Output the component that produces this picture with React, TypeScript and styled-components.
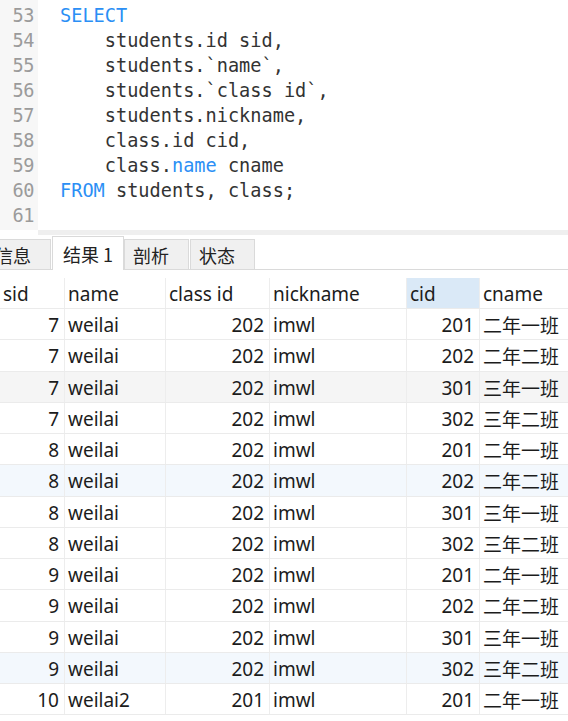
import React from "react";
import styled, { createGlobalStyle } from "styled-components";

const Global = createGlobalStyle`
  html, body { margin: 0; padding: 0; background: #fff; overflow: hidden; }
  body { width: 568px; height: 721px; }
`;

const Page = styled.div`
  width: 568px;
  height: 721px;
  overflow: hidden;
  display: flex;
  flex-direction: column;
  background: #fff;
`;

const Editor = styled.div`
  display: flex;
  height: 230px;
  flex: none;
  font-family: "DejaVu Sans Mono", "Liberation Mono", monospace;
  font-size: 18.6px;
  line-height: 25px;
`;

const Gutter = styled.div`
  width: 38px;
  box-sizing: border-box;
  background: #f7f7f7;
  color: #9b9b9b;
  text-align: right;
  padding: 3px 4px 0 0;
  letter-spacing: -0.4px;
`;

const Code = styled.div`
  flex: 1;
  padding: 3px 0 0 22px;
  color: #333;
  white-space: pre;
`;

const Line = styled.div`
  height: 25px;
`;

const Kw = styled.span`
  color: #2b8ff5;
`;

const Track = styled.div`
  display: flex;
  height: 5px;
  flex: none;
`;

const TrackGap = styled.div`
  width: 38px;
  background: #fff;
`;

const TrackBar = styled.div`
  flex: 1;
  background: #efefef;
`;

const TabBar = styled.div`
  display: flex;
  align-items: flex-end;
  height: 35px;
  box-sizing: border-box;
  border-bottom: 1px solid #dadada;
  margin-left: -14px;
  gap: 1px;
  flex: none;
  font-family: "Noto Sans CJK SC", "Noto Sans", sans-serif;
  font-size: 18px;
  color: #222;
`;

const Tab = styled.div<{ $active?: boolean }>`
  min-width: 65px;
  box-sizing: border-box;
  padding: ${(p) => (p.$active ? "0 10px" : "0 8px")};
  height: ${(p) => (p.$active ? "34px" : "30px")};
  margin-bottom: ${(p) => (p.$active ? "-1px" : "0")};
  margin-right: ${(p) => (p.$active ? "-1px" : "0")};
  background: ${(p) => (p.$active ? "#fff" : "#f0f0f0")};
  border: 1px solid #dadada;
  border-bottom: none;
  display: flex;
  align-items: center;
  line-height: 1;
`;

const Grid = styled.div`
  margin-top: 7px;
  font-family: "Noto Sans", "Noto Sans CJK SC", sans-serif;
  font-size: 19px;
  color: #1c1c1c;
`;

const Row = styled.div<{ $tone?: "gray" | "blue" | "none"; $head?: boolean }>`
  display: grid;
  grid-template-columns: 65px 101px 104px 137px 73px 1fr;
  height: ${(p) => (p.$head ? "32px" : "31.25px")};
  box-sizing: border-box;
  border-bottom: 1px solid #ebebeb;
  background: ${(p) =>
    p.$tone === "gray" ? "#f5f5f5" : p.$tone === "blue" ? "#f3f8fd" : "#fff"};
`;

const Cell = styled.div<{ $num?: boolean; $hl?: boolean }>`
  box-sizing: border-box;
  border-right: 1px solid #ededed;
  display: flex;
  align-items: center;
  justify-content: ${(p) => (p.$num ? "flex-end" : "flex-start")};
  padding: ${(p) => (p.$num ? "2px 5px 0 0" : "2px 0 0 3px")};
  background: ${(p) => (p.$hl ? "#dae9f7" : "transparent")};
  white-space: nowrap;
  overflow: hidden;
  &:last-child { border-right: none; }
`;

const HeadCell = styled(Cell)`
  margin-top: 1px;
`;

const codeLines: React.ReactNode[] = [
  <Kw>SELECT</Kw>,
  <>{"    students.id sid,"}</>,
  <>{"    students.`name`,"}</>,
  <>{"    students.`class id`,"}</>,
  <>{"    students.nickname,"}</>,
  <>{"    class.id cid,"}</>,
  <>{"    class."}<Kw>name</Kw>{" cname"}</>,
  <><Kw>FROM</Kw>{" students, class;"}</>,
  <>{""}</>,
];

type R = [number, string, number, string, number, string];
const rows: R[] = [
  [7, "weilai", 202, "imwl", 201, "二年一班"],
  [7, "weilai", 202, "imwl", 202, "二年二班"],
  [7, "weilai", 202, "imwl", 301, "三年一班"],
  [7, "weilai", 202, "imwl", 302, "三年二班"],
  [8, "weilai", 202, "imwl", 201, "二年一班"],
  [8, "weilai", 202, "imwl", 202, "二年二班"],
  [8, "weilai", 202, "imwl", 301, "三年一班"],
  [8, "weilai", 202, "imwl", 302, "三年二班"],
  [9, "weilai", 202, "imwl", 201, "二年一班"],
  [9, "weilai", 202, "imwl", 202, "二年二班"],
  [9, "weilai", 202, "imwl", 301, "三年一班"],
  [9, "weilai", 202, "imwl", 302, "三年二班"],
  [10, "weilai2", 201, "imwl", 201, "二年一班"],
];

const toneFor = (i: number): "gray" | "blue" | "none" =>
  i === 2 ? "gray" : i === 5 || i === 11 ? "blue" : "none";

export default function App() {
  return (
    <Page>
      <Global />
      <Editor>
        <Gutter>
          {codeLines.map((_, i) => (
            <Line key={i}>{53 + i}</Line>
          ))}
        </Gutter>
        <Code>
          {codeLines.map((l, i) => (
            <Line key={i}>{l}</Line>
          ))}
        </Code>
      </Editor>
      <Track>
        <TrackGap />
        <TrackBar />
      </Track>
      <TabBar>
        <Tab>信息</Tab>
        <Tab $active>结果 1</Tab>
        <Tab>剖析</Tab>
        <Tab>状态</Tab>
      </TabBar>
      <Grid>
        <Row $head>
          <HeadCell>sid</HeadCell>
          <HeadCell>name</HeadCell>
          <HeadCell>class id</HeadCell>
          <HeadCell>nickname</HeadCell>
          <HeadCell $hl>cid</HeadCell>
          <HeadCell>cname</HeadCell>
        </Row>
        {rows.map((r, i) => (
          <Row key={i} $tone={toneFor(i)}>
            <Cell $num>{r[0]}</Cell>
            <Cell>{r[1]}</Cell>
            <Cell $num>{r[2]}</Cell>
            <Cell>{r[3]}</Cell>
            <Cell $num>{r[4]}</Cell>
            <Cell>{r[5]}</Cell>
          </Row>
        ))}
      </Grid>
    </Page>
  );
}
